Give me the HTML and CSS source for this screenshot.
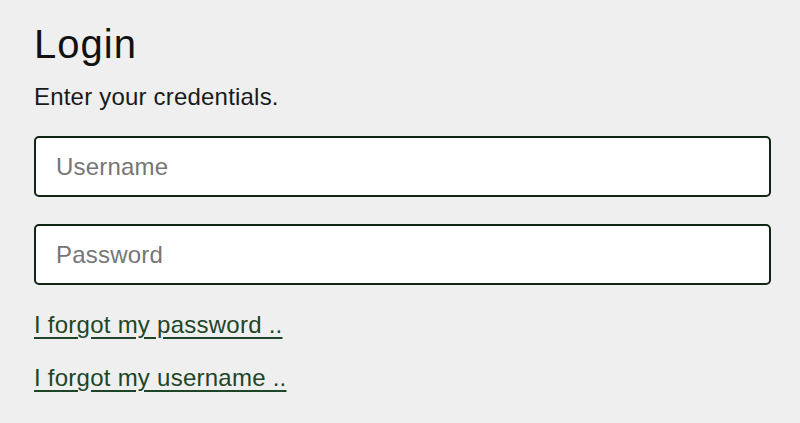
FILE: index.html
```html
<!DOCTYPE html>
<html>
<head>
<meta charset="utf-8">
<link rel="stylesheet" href="styles.css">
</head>
<body>
<main class="login">
  <h1 class="title">Login</h1>
  <p class="subtitle">Enter your credentials.</p>
  <form class="form">
    <input class="field" type="text" placeholder="Username">
    <input class="field" type="password" placeholder="Password">
  </form>
  <nav class="links">
    <a class="link" href="#">I forgot my password ..</a>
    <a class="link" href="#">I forgot my username ..</a>
  </nav>
</main>
</body>
</html>
```

FILE: styles.css
```css
html, body {
  margin: 0;
  padding: 0;
  background: #efefef;
}
body {
  font-family: "Liberation Sans", Arial, sans-serif;
  color: #111;
}
.login {
  width: 737px;
  padding: 21px 0 0 34px;
  display: flex;
  flex-direction: column;
}
.title {
  margin: 0;
  font-size: 40px;
  font-weight: 400;
  line-height: 46px;
  letter-spacing: 1px;
  color: #111;
}
.subtitle {
  margin: 16px 0 0;
  font-size: 24px;
  line-height: 28px;
  letter-spacing: 0.2px;
  color: #1a1a1a;
}
.form {
  margin-top: 25px;
  display: flex;
  flex-direction: column;
  gap: 27px;
}
.field {
  box-sizing: border-box;
  height: 61px;
  width: 100%;
  margin: 0;
  padding: 0 20px;
  border: 2px solid #0f2614;
  border-radius: 5px;
  background: #fff;
  font-family: "Liberation Sans", Arial, sans-serif;
  font-size: 24px;
  letter-spacing: 0.2px;
  color: #222;
  outline: none;
}
.field::placeholder {
  color: #767676;
}
.links {
  margin-top: 26px;
  display: flex;
  flex-direction: column;
  align-items: flex-start;
  gap: 25px;
}
.link {
  font-size: 24px;
  line-height: 28px;
  letter-spacing: 0.25px;
  color: #1d4527;
  text-decoration: underline;
  text-underline-offset: 4px;
}
```
